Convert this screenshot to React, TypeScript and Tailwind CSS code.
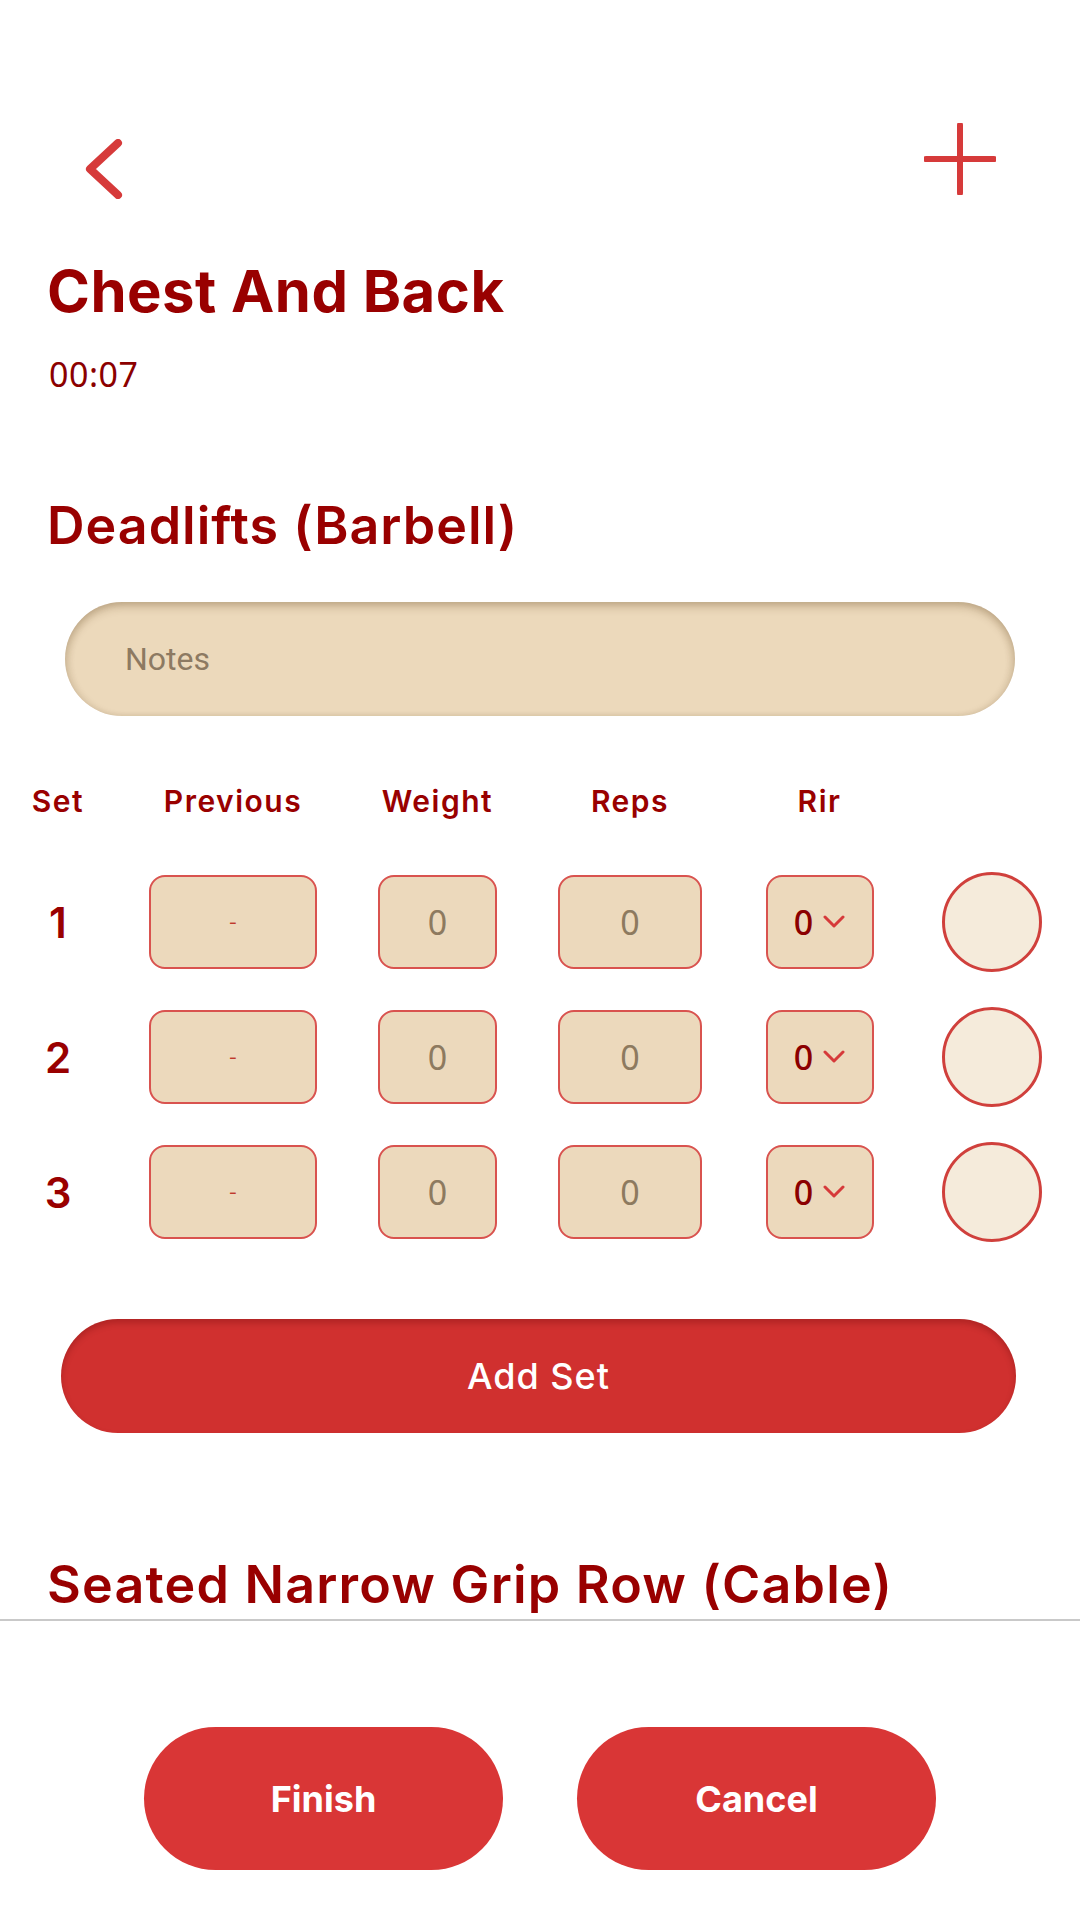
import React from "react";

const sets = [1, 2, 3];

const Chevron = () => (
  <svg width="40" height="60" viewBox="0 0 40 60" fill="none">
    <polyline
      points="34,4 6,30 34,56"
      stroke="#d63a3a"
      strokeWidth="8"
      strokeLinecap="round"
      strokeLinejoin="round"
    />
  </svg>
);

const Plus = () => (
  <svg width="72" height="72" viewBox="0 0 72 72" fill="none">
    <line x1="36" y1="2" x2="36" y2="70" stroke="#d63a3a" strokeWidth="6" strokeLinecap="round" />
    <line x1="2" y1="36" x2="70" y2="36" stroke="#d63a3a" strokeWidth="6" strokeLinecap="round" />
  </svg>
);

const SmallDown = () => (
  <svg width="22" height="14" viewBox="0 0 22 14" fill="none">
    <polyline
      points="2,2 11,11 20,2"
      stroke="#d63a3a"
      strokeWidth="3"
      strokeLinecap="round"
      strokeLinejoin="round"
    />
  </svg>
);

const box =
  "h-[94px] rounded-[16px] border-2 border-[#d9534f] bg-[#ecd9bc] flex items-center justify-center";

const App: React.FC = () => {
  return (
    <div className="w-[1080px] h-[1920px] bg-white flex flex-col overflow-hidden font-['Inter',sans-serif]">
      {/* scroll area */}
      <div className="h-[1619px] overflow-hidden">
        <div className="flex justify-between items-start pt-[123px] pl-[84px] pr-[84px] h-[198px]">
          <div className="mt-[16px]">
            <Chevron />
          </div>
          <Plus />
        </div>

        <h1 className="mt-[58px] pl-[47px] text-[58px] leading-[70px] font-bold text-[#990000] tracking-[0.5px]">
          Chest And Back
        </h1>
        <div className="mt-[28px] pl-[49px] text-[34px] leading-[40px] text-[#8b0000] font-['Noto_Sans',sans-serif] tracking-[0.5px]">
          00:07
        </div>

        <h2 className="mt-[101px] pl-[47px] text-[52px] leading-[62px] font-semibold text-[#990000] tracking-[1px]">
          Deadlifts (Barbell)
        </h2>

        <div className="mt-[45px] mx-[65px] h-[114px] rounded-full bg-[#ecd9bb] shadow-[inset_0_5px_8px_rgba(90,60,20,0.25),inset_4px_0_6px_rgba(90,60,20,0.08),inset_-4px_0_6px_rgba(90,60,20,0.08)] flex items-center pl-[60px]">
          <span className="text-[32px] text-[#8d7a62] font-['Roboto',sans-serif]">Notes</span>
        </div>

        <div className="mt-[63px] grid grid-cols-[116px_234px_175px_210px_169px_1fr] items-center h-[40px] text-[30px] tracking-[1.5px] font-semibold text-[#990000] text-center">
          <span>Set</span>
          <span>Previous</span>
          <span>Weight</span>
          <span>Reps</span>
          <span>Rir</span>
          <span></span>
        </div>

        <div className="mt-[53px] flex flex-col gap-[41px]">
          {sets.map((n) => (
            <div
              key={n}
              className="grid grid-cols-[116px_234px_175px_210px_169px_1fr] items-center h-[94px]"
            >
              <span className="text-center text-[42px] font-semibold text-[#990000]">{n}</span>
              <div className="flex justify-center">
                <div className={`${box} w-[168px]`}>
                  <span className="text-[18px] text-[#c0392b]">-</span>
                </div>
              </div>
              <div className="flex justify-center">
                <div className={`${box} w-[119px]`}>
                  <span className="text-[34px] text-[#8d7a5f] font-['Noto_Sans',sans-serif]">0</span>
                </div>
              </div>
              <div className="flex justify-center">
                <div className={`${box} w-[144px]`}>
                  <span className="text-[34px] text-[#8d7a5f] font-['Noto_Sans',sans-serif]">0</span>
                </div>
              </div>
              <div className="flex justify-center">
                <div className={`${box} w-[108px] gap-[10px]`}>
                  <span className="text-[34px] font-medium text-[#8b0000] font-['Noto_Sans',sans-serif]">0</span>
                  <SmallDown />
                </div>
              </div>
              <div className="flex justify-center">
                <div className="w-[100px] h-[100px] rounded-full border-[3px] border-[#d0403c] bg-[#f5ebdb]" />
              </div>
            </div>
          ))}
        </div>

        <button className="mt-[83px] ml-[61px] w-[955px] h-[114px] rounded-full bg-[#d0302f] shadow-[inset_0_4px_6px_rgba(80,0,0,0.25)] text-white text-[36px] font-medium tracking-[1px] flex items-center justify-center">
          Add Set
        </button>

        <h2 className="mt-[121px] pl-[47px] text-[52px] leading-[62px] font-semibold text-[#990000] tracking-[1.2px]">
          Seated Narrow Grip Row (Cable)
        </h2>
      </div>

      {/* bottom bar */}
      <div className="flex-1 border-t-2 border-[#c9c9c9] flex justify-center gap-[74px] pt-[106px]">
        <button className="w-[359px] h-[143px] rounded-full bg-[#d93636] text-white text-[36px] font-bold">
          Finish
        </button>
        <button className="w-[359px] h-[143px] rounded-full bg-[#d93636] text-white text-[36px] font-bold">
          Cancel
        </button>
      </div>
    </div>
  );
};

export default App;
